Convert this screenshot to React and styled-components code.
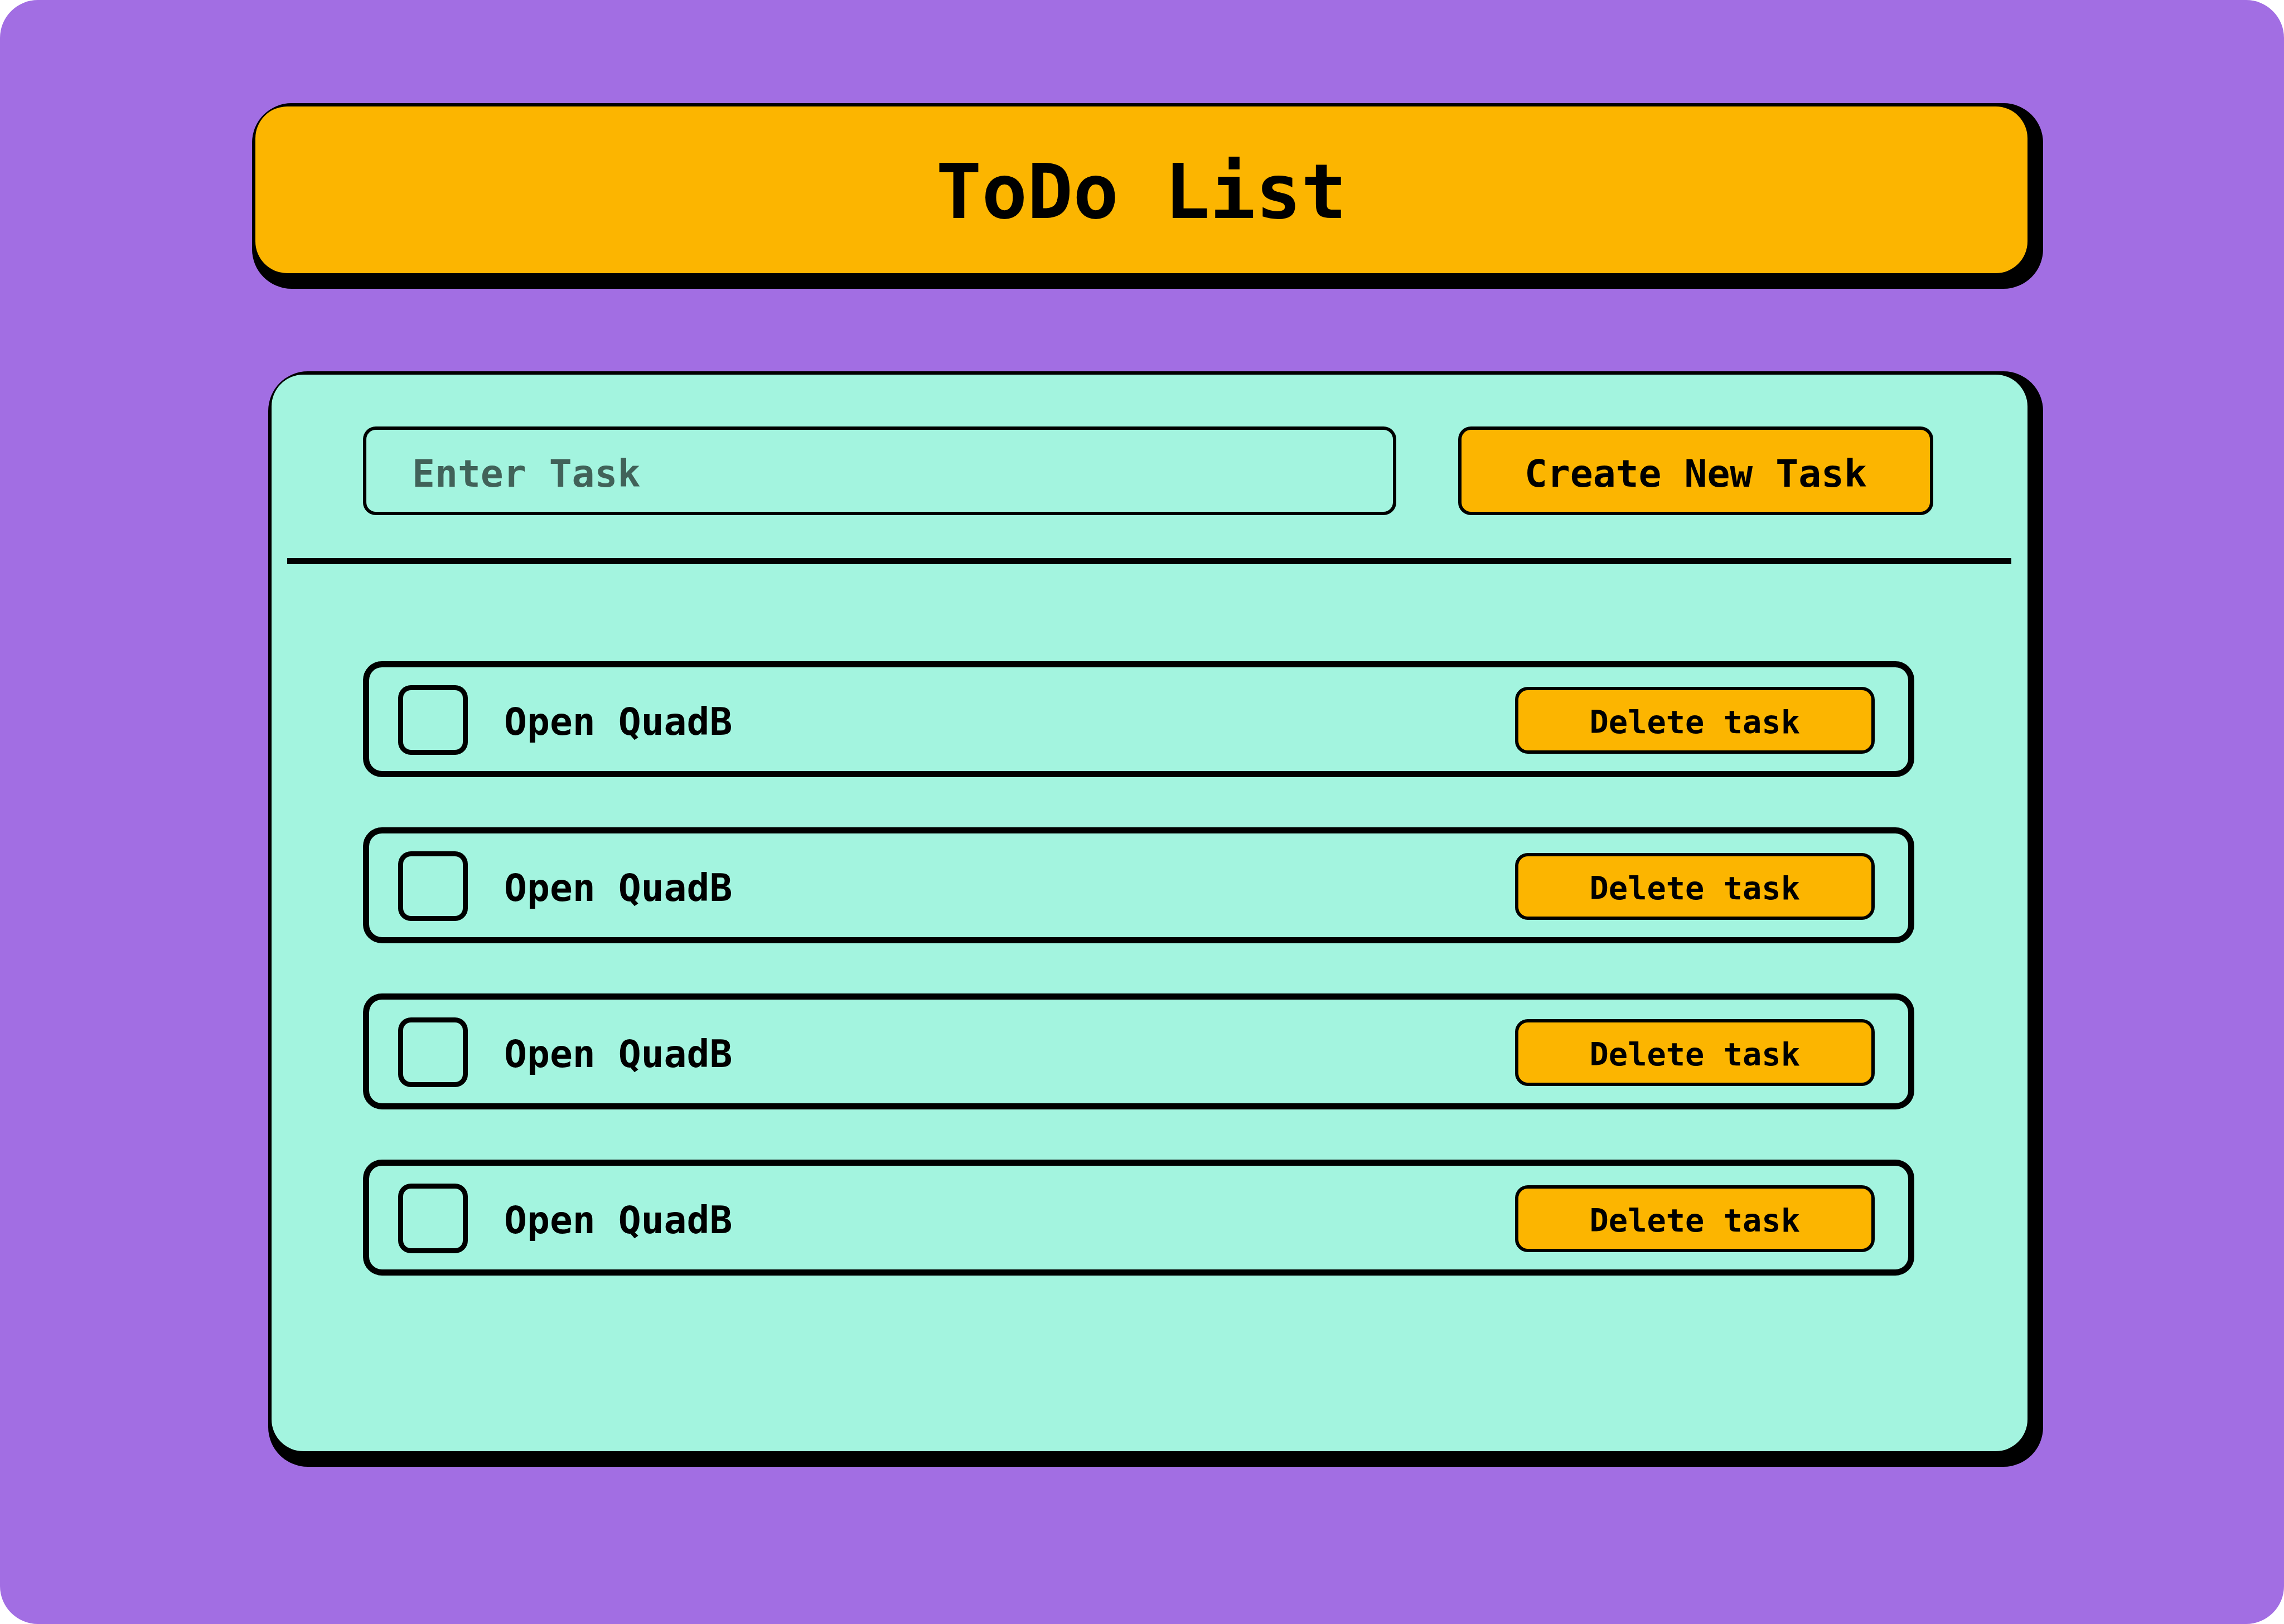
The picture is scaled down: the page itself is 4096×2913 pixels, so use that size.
import React, { useState } from "react";
import styled, { createGlobalStyle } from "styled-components";

const color = {
  purple: "#a26ee3",
  amber: "#fcb500",
  mint: "#a3f4df",
  ink: "#000000",
  hint: "rgba(0, 0, 0, 0.6)",
};

const GlobalStyle = createGlobalStyle`
  *, *::before, *::after {
    box-sizing: border-box;
  }
  body {
    margin: 0;
    background: #ffffff;
    color: ${color.ink};
    font-family: "DejaVu Sans Mono", monospace;
    font-weight: 700;
  }
`;

const Page = styled.div`
  display: flex;
  flex-direction: column;
  gap: 148px;
  min-height: 100vh;
  padding: 185px 432px 282px 452px;
  border-radius: 68px;
  background: ${color.purple};
`;

const Slab = styled.div`
  padding: 6px 28px 28px 6px;
  border-radius: 71px;
  background: ${color.ink};
`;

const Banner = styled(Slab).attrs({ as: "header" })``;

const BannerFace = styled.div`
  display: flex;
  align-items: center;
  justify-content: center;
  height: 299px;
  padding-top: 6px;
  border-radius: 57px;
  background: ${color.amber};
`;

const Title = styled.h1`
  margin: 0;
  font-size: 136px;
  line-height: 154px;
`;

const Board = styled(Slab).attrs({ as: "main" })`
  margin-left: 29px;
`;

const BoardFace = styled.div`
  padding-bottom: 315px;
  border-radius: 57px;
  background: ${color.mint};
`;

const TaskForm = styled.form`
  display: flex;
  gap: 111px;
  padding: 93px 169px 77px 164px;
`;

const TaskInput = styled.input`
  flex: 1;
  min-width: 0;
  height: 159px;
  padding: 10px 82px 0;
  border: 6px solid ${color.ink};
  border-radius: 23px;
  background: transparent;
  color: ${color.ink};
  font: inherit;
  font-size: 68px;

  &::placeholder {
    color: ${color.hint};
    opacity: 1;
  }
`;

const Button = styled.button`
  flex: none;
  border: 6px solid ${color.ink};
  border-radius: 23px;
  background: ${color.amber};
  color: ${color.ink};
  font: inherit;
  cursor: pointer;
`;

const CreateButton = styled(Button)`
  height: 159px;
  padding: 10px 113px 0;
  font-size: 68px;
`;

const DeleteButton = styled(Button)`
  height: 120px;
  padding: 6px 128px 0;
  font-size: 57px;
`;

const Divider = styled.hr`
  height: 11px;
  margin: 0 29px 0 28px;
  border: 0;
  background: ${color.ink};
`;

const TaskList = styled.ul`
  display: flex;
  flex-direction: column;
  gap: 90px;
  margin: 0;
  padding: 174px 203px 0 164px;
  list-style: none;
`;

const TaskRow = styled.li`
  display: flex;
  align-items: center;
  justify-content: space-between;
  padding: 32px 60px 29px 52px;
  border: 11px solid ${color.ink};
  border-radius: 34px;
`;

const TaskLabel = styled.label`
  display: flex;
  align-items: center;
  gap: 65px;
  cursor: pointer;
`;

const Checkbox = styled.input.attrs({ type: "checkbox" })`
  appearance: none;
  width: 125px;
  height: 125px;
  margin: 0;
  border: 9px solid ${color.ink};
  border-radius: 23px;
  cursor: pointer;

  &:checked {
    background: ${color.amber};
  }
`;

const TaskName = styled.span`
  padding-top: 6px;
  font-size: 68px;
  line-height: 78px;
`;

const initialTasks = [1, 2, 3, 4].map((id) => ({ id, name: "Open QuadB", done: false }));

export default function App() {
  const [tasks, setTasks] = useState(initialTasks);
  const [draft, setDraft] = useState("");

  const addTask = (event) => {
    event.preventDefault();
    const name = draft.trim();
    if (!name) return;
    setTasks([...tasks, { id: Date.now(), name, done: false }]);
    setDraft("");
  };

  const toggleTask = (id) =>
    setTasks(tasks.map((task) => (task.id === id ? { ...task, done: !task.done } : task)));

  const deleteTask = (id) => setTasks(tasks.filter((task) => task.id !== id));

  return (
    <>
      <GlobalStyle />
      <Page>
        <Banner>
          <BannerFace>
            <Title>ToDo List</Title>
          </BannerFace>
        </Banner>
        <Board>
          <BoardFace>
            <TaskForm onSubmit={addTask}>
              <TaskInput
                type="text"
                aria-label="Enter Task"
                placeholder="Enter Task"
                value={draft}
                onChange={(event) => setDraft(event.target.value)}
              />
              <CreateButton type="submit">Create New Task</CreateButton>
            </TaskForm>
            <Divider />
            <TaskList>
              {tasks.map((task) => (
                <TaskRow key={task.id}>
                  <TaskLabel>
                    <Checkbox checked={task.done} onChange={() => toggleTask(task.id)} />
                    <TaskName>{task.name}</TaskName>
                  </TaskLabel>
                  <DeleteButton type="button" onClick={() => deleteTask(task.id)}>
                    Delete task
                  </DeleteButton>
                </TaskRow>
              ))}
            </TaskList>
          </BoardFace>
        </Board>
      </Page>
    </>
  );
}
